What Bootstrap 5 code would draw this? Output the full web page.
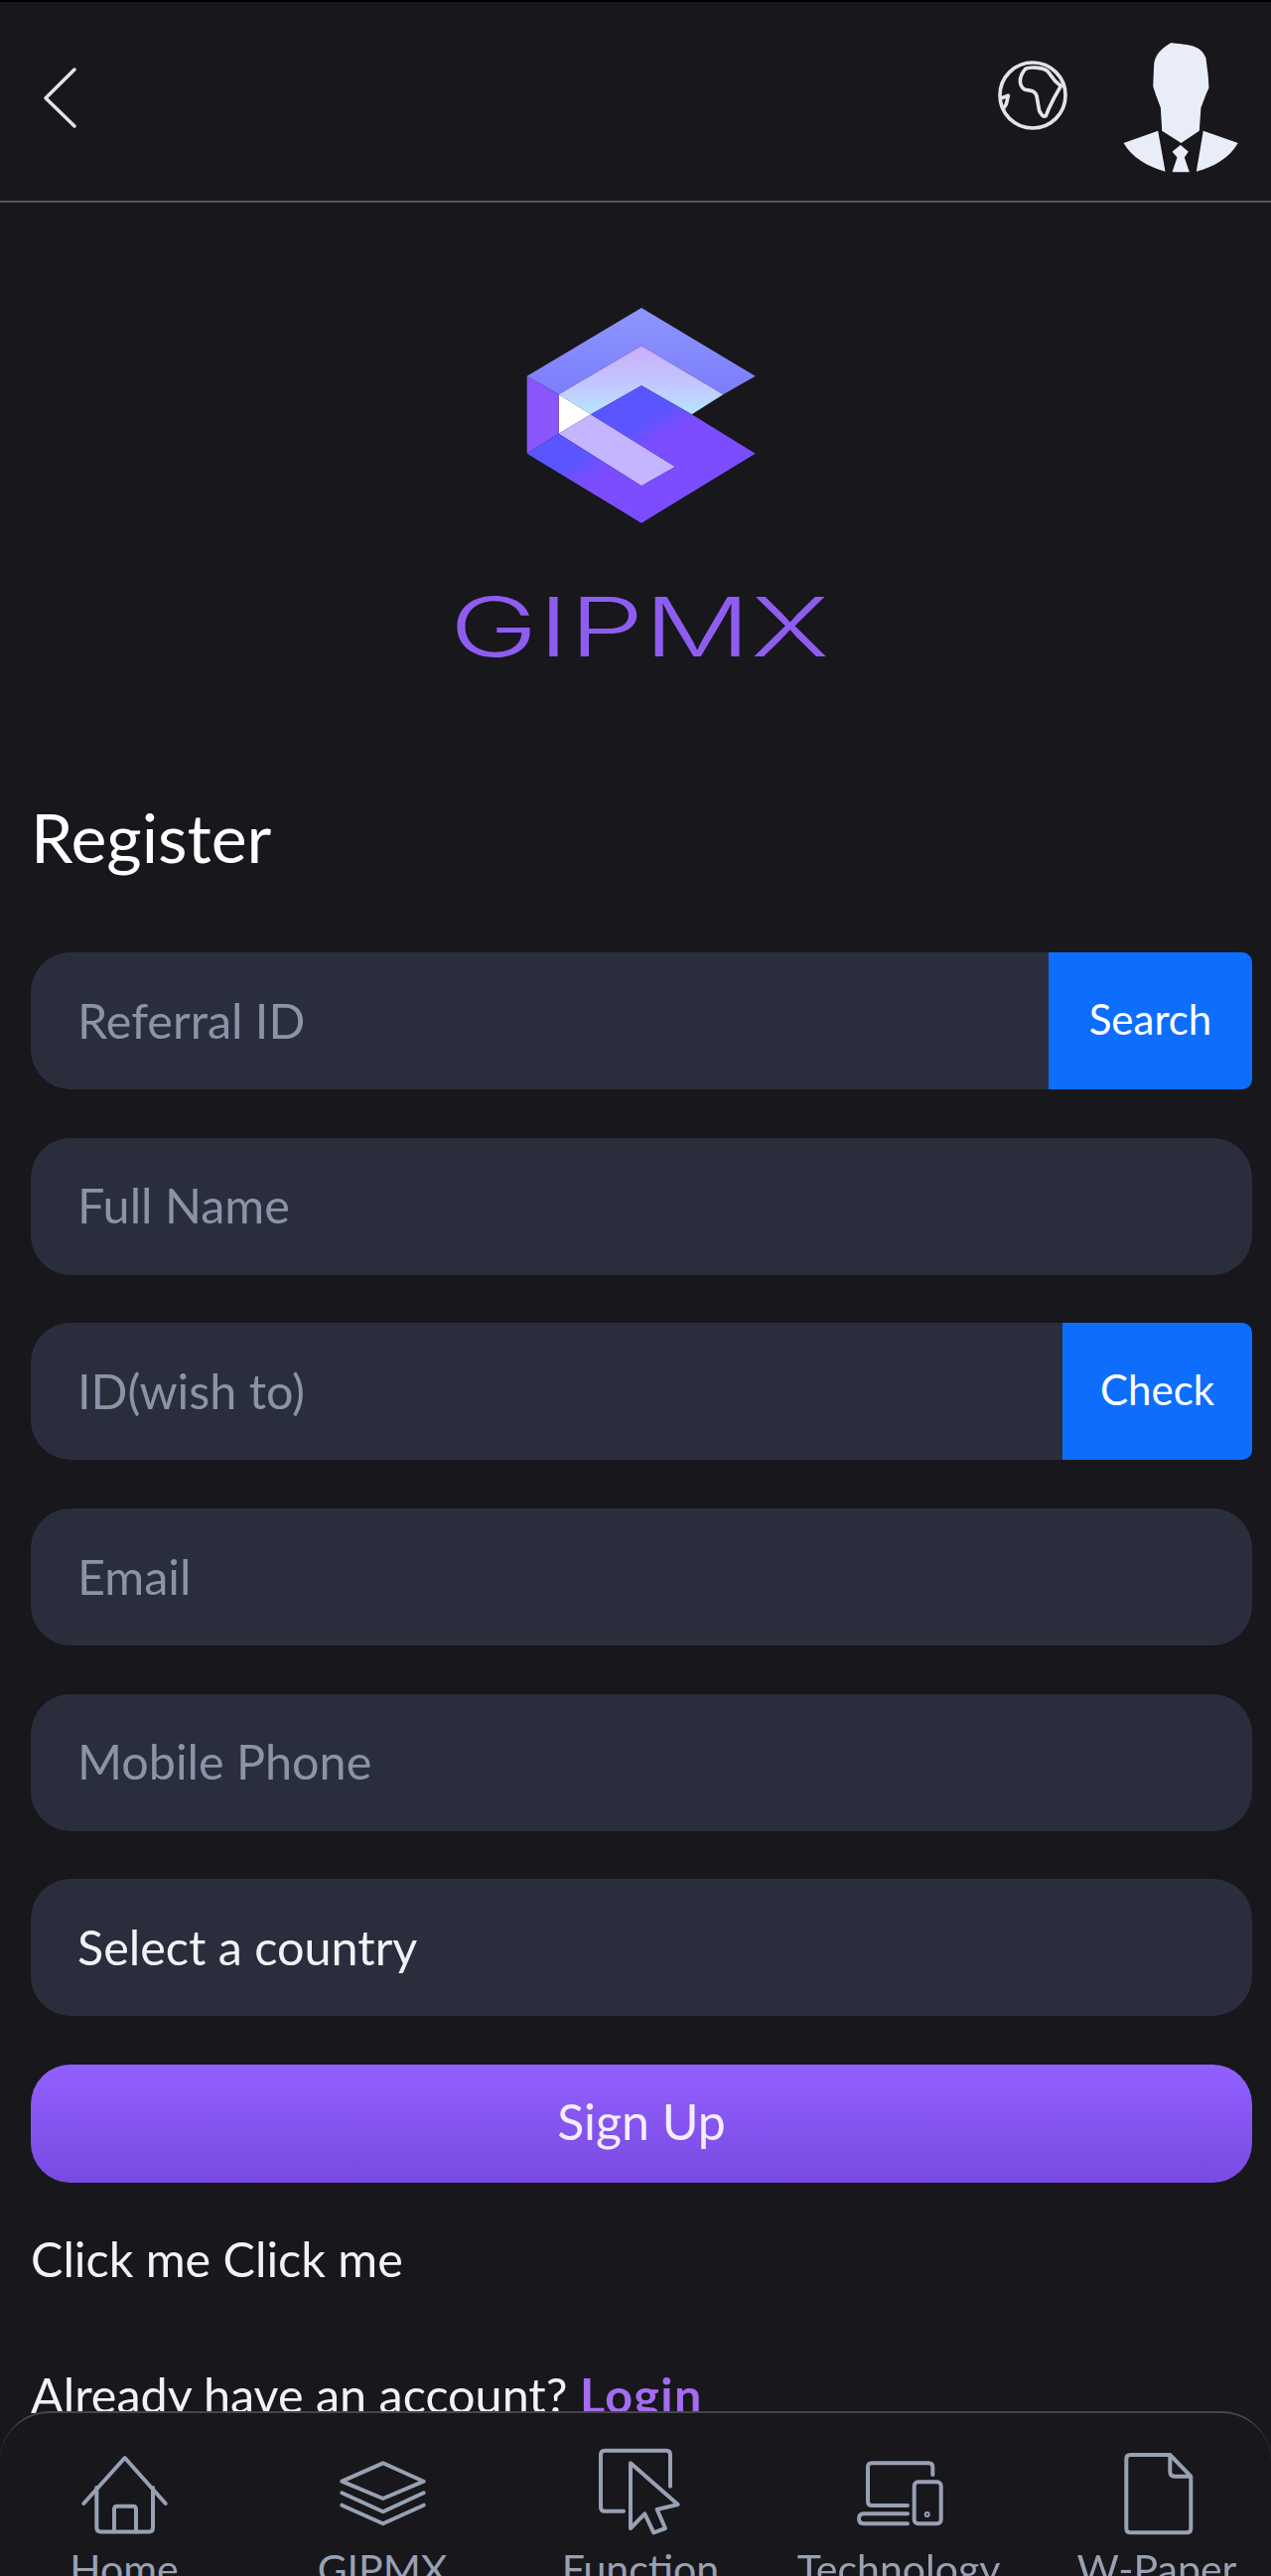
<!DOCTYPE html>
<html lang="en">
<head>
  <meta charset="UTF-8">
  <title>GIPMX Register</title>
  <meta name="viewport" content="width=device-width, initial-scale=1">
  <link rel="stylesheet" href="https://cdn.jsdelivr.net/npm/bootstrap@5.3.0/dist/css/bootstrap.min.css">
  <style>
    html, body {
      height: 2594px;
      overflow: hidden;
    }
    body {
      background-color: #17171c;
      color: #f1f2f6;
      font-family: "Lato", "Open Sans", sans-serif;
      font-size: 48.5px;
    }

    /* Top bar */
    .top-bar {
      height: 204px;
      border-top: 2px solid #000;
      border-bottom: 2px solid #55565c;
      padding: 0 27px 0 42px;
    }
    .top-bar .globe-btn { margin-right: 46px; margin-top: -14px; }
    .top-bar .back-btn { margin-top: -14px; }
    .top-bar .avatar { margin-top: 12px; }

    /* Logo */
    .logo-wrap { padding-top: 76px; }
    .logo-word {
      font-family: "Inter", sans-serif;
      font-weight: 300;
      font-size: 82px;
      line-height: 100px;
      color: #8e5df0;
      width: fit-content;
      margin: 42px auto 0;
      transform: translateX(4px) scaleX(1.46);
    }

    /* Form */
    .page-main { padding: 0 19px 0 31px; }
    .page-title {
      font-size: 68px;
      font-weight: 400;
      margin: 123px 0 78px;
      line-height: 76px;
      color: #fff;
    }
    .field-row {
      height: 138px;
      margin-bottom: 48.7px;
    }
    .field-row .form-control,
    .field-row .form-select {
      height: 138px;
      background-color: #2a2e3c;
      background-image: none;
      border: 0;
      border-radius: 40px;
      padding: 0 47px 3px;
      font-size: 48.5px;
      color: #f1f2f6;
      box-shadow: none;
    }
    .field-row .form-control::placeholder { color: #8b93a7; opacity: 1; }
    .field-row.input-group .form-control {
      border-radius: 40px 0 0 40px;
    }
    .field-row .btn {
      height: 138px;
      border: 0;
      border-radius: 0 10px 10px 0;
      font-size: 42px;
      padding-bottom: 9px;
      background-color: #0d6efd;
      color: #fff;
    }
    .btn-search { width: 205px; }
    .btn-check-id { width: 191px; }
    .signup-btn {
      height: 119px;
      border: 0;
      border-radius: 40px;
      padding-bottom: 10px;
      background: linear-gradient(180deg, #9260ff 0%, #794ae2 100%);
      color: #f4edff;
      font-size: 50px;
      margin-bottom: 48px;
    }
    .signup-btn:hover { color: #f4edff; }
    .line-text {
      line-height: 56px;
      margin-bottom: 81px;
    }
    .login-link {
      color: #a46cf0;
      font-weight: 700;
      letter-spacing: 1.4px;
      text-decoration: none;
    }

    /* Bottom nav */
    .bottom-nav {
      height: 166px;
      background-color: #17171c;
      border-top: 2px solid #45464c;
      border-radius: 50px 50px 0 0;
      overflow: hidden;
      z-index: 10;
    }
    .nav-grid {
      display: grid;
      grid-template-columns: 250px 270px 250px 270px 240px;
      padding-top: 30px;
    }
    .nav-cell {
      color: #98a1b3;
      font-size: 41px;
      line-height: 48px;
      text-align: center;
      white-space: nowrap;
      text-decoration: none;
    }
    .nav-cell:last-child { padding-left: 10px; }
    .nav-cell svg {
      display: block;
      margin: 0 auto 3px;
      fill: none;
      stroke: #98a1b3;
      stroke-width: 4;
      stroke-linejoin: round;
      stroke-linecap: round;
    }
  </style>
</head>
<body>
  <!-- TOP BAR -->
  <header class="top-bar d-flex justify-content-between align-items-center">
    <a href="#" class="back-btn">
      <svg width="44" height="70" viewBox="42 62 44 70" fill="none" stroke="#e4e4e6" stroke-width="3.5" stroke-linecap="round" stroke-linejoin="round">
        <path d="M75 68 46 96.7 75 125"/>
      </svg>
    </a>
    <div class="d-flex align-items-center">
      <a href="#" class="globe-btn">
        <svg width="80" height="80" viewBox="60 103 240 240" fill="none" stroke="#e4e4e6" stroke-width="11" stroke-linejoin="round">
          <circle cx="180" cy="223" r="99"/>
          <path d="M158 143C170 136 210 138 225 150L248 180 265 195 245 230 228 265 220 285C212 290 205 280 200 270L192 225C185 205 170 210 155 205 140 195 135 170 158 143Z"/>
          <path d="M84 232 106 224 100 250 92 262"/>
        </svg>
      </a>
      <svg class="avatar" width="127" height="143" viewBox="440 50 380 430" fill="#e9edf7">
        <path d="M600 68C640 75 690 70 705 115L712 170 714 205 705 225 690 265 685 335 630 372 572 335 568 265 553 225 545 200 548 130C555 95 580 80 600 68Z"/>
        <path d="M456 372 560 335 582 458C530 445 480 415 456 372Z"/>
        <path d="M802 372 697 335 676 458C730 445 778 415 802 372Z"/>
        <path d="M628 378 652 398 640 415 655 460H603L618 415 603 398Z"/>
      </svg>
    </div>
  </header>

  <!-- LOGO -->
  <div class="logo-wrap">
    <svg class="d-block mx-auto" width="440" height="260" viewBox="0 0 1320 780">
      <defs>
        <linearGradient id="bandGrad" x1="0" y1="0" x2="0" y2="1">
          <stop offset="0" stop-color="#c9aefc"/>
          <stop offset="0.55" stop-color="#c3c6ff"/>
          <stop offset="1" stop-color="#b5e6ff"/>
        </linearGradient>
        <linearGradient id="topGrad" x1="0" y1="0" x2="0" y2="1">
          <stop offset="0" stop-color="#8d96ff"/>
          <stop offset="1" stop-color="#7c7dfb"/>
        </linearGradient>
        <linearGradient id="coreGrad" gradientUnits="userSpaceOnUse" x1="660" y1="445" x2="695" y2="505">
          <stop offset="0" stop-color="#5a55ff"/>
          <stop offset="1" stop-color="#7c4cff"/>
        </linearGradient>
      </defs>
      <path fill="url(#topGrad)" d="M332 296 678 90 1022 296 925 352 678 205 428 352Z"/>
      <path fill="url(#bandGrad)" d="M428 352 678 205 925 352 830 412 678 325 525 412Z"/>
      <path fill="#fff" d="M428 352 525 412 428 470Z"/>
      <path fill="#8a55fb" d="M332 296 428 352V470L332 530Z"/>
      <path fill="#c5b4ff" d="M428 470 525 412 780 570 678 628Z"/>
      <path fill="url(#coreGrad)" d="M525 412 678 325 830 412 1022 530 678 740 332 530 428 470 678 628 780 570Z"/>
    </svg>
    <div class="logo-word">GIPMX</div>
  </div>

  <!-- FORM -->
  <main class="page-main">
    <h1 class="page-title">Register</h1>
    <form>
      <div class="field-row input-group">
        <input type="text" class="form-control" placeholder="Referral ID">
        <button type="button" class="btn btn-primary btn-search">Search</button>
      </div>
      <div class="field-row">
        <input type="text" class="form-control" placeholder="Full Name">
      </div>
      <div class="field-row input-group">
        <input type="text" class="form-control" placeholder="ID(wish to)">
        <button type="button" class="btn btn-primary btn-check-id">Check</button>
      </div>
      <div class="field-row">
        <input type="email" class="form-control" placeholder="Email">
      </div>
      <div class="field-row">
        <input type="tel" class="form-control" placeholder="Mobile Phone">
      </div>
      <div class="field-row">
        <select class="form-select">
          <option>Select a country</option>
        </select>
      </div>
      <button type="button" class="btn signup-btn w-100 d-block">Sign Up</button>
    </form>
    <p class="line-text">Click me Click me</p>
    <p class="line-text">Already have an account? <a href="#" class="login-link">Login</a></p>
  </main>

  <!-- BOTTOM NAV -->
  <nav class="bottom-nav position-fixed bottom-0 start-0 end-0">
    <div class="nav-grid">
      <a href="#" class="nav-cell">
        <svg width="100" height="100" viewBox="75 2458 100 100">
          <path d="M84.3 2519 125.7 2473 166.7 2519"/>
          <path d="M97.3 2503V2543Q97.3 2547.5 101.5 2547.5H150Q154 2547.5 154 2543V2503"/>
          <path d="M115 2547.5V2525Q115 2521.7 118 2521.7H134Q137 2521.7 137 2525V2547.5"/>
        </svg>
        Home
      </a>
      <a href="#" class="nav-cell">
        <svg width="100" height="100" viewBox="335 2458 100 100">
          <path d="M385.7 2478.3 426.7 2496.7 385.7 2514 344.3 2496.7Z"/>
          <path d="M344.3 2508.3 385.7 2527.3 426.7 2508.3"/>
          <path d="M344.3 2520.7 385.7 2539.3 426.7 2520.7"/>
        </svg>
        GIPMX
      </a>
      <a href="#" class="nav-cell">
        <svg width="100" height="100" viewBox="595 2458 100 100">
          <path d="M628 2526.7H609Q605 2526.7 605 2522.7V2469.7Q605 2465.7 609 2465.7H671Q675 2465.7 675 2469.7V2501.7"/>
          <path d="M635 2478.3 682.7 2520 661.7 2525 670 2544 658.3 2548.3 649.3 2529.3 635 2544Z"/>
        </svg>
        Function
      </a>
      <a href="#" class="nav-cell">
        <svg width="100" height="100" viewBox="855 2458 100 100">
          <path d="M914 2521H878Q874 2521 874 2517V2482.3Q874 2478.3 878 2478.3H935.3Q939.3 2478.3 939.3 2482.3V2490"/>
          <path d="M914 2529.3H870Q865 2529.3 865 2534.3 865 2539.3 870 2539.3H914"/>
          <rect x="920.7" y="2497.3" width="27" height="42" rx="4"/>
          <circle cx="933.7" cy="2530" r="1" />
        </svg>
        Technology
      </a>
      <a href="#" class="nav-cell">
        <svg width="100" height="100" viewBox="1115 2458 100 100">
          <path d="M1178.3 2470H1138.3Q1134.3 2470 1134.3 2474V2544.3Q1134.3 2548.3 1138.3 2548.3H1195.3Q1199.3 2548.3 1199.3 2544.3V2491.7L1178.3 2470V2486.7Q1178.3 2491.7 1183.3 2491.7H1199.3"/>
        </svg>
        W-Paper
      </a>
    </div>
  </nav>

  <script src="https://cdn.jsdelivr.net/npm/bootstrap@5.3.0/dist/js/bootstrap.bundle.min.js"></script>
</body>
</html>
